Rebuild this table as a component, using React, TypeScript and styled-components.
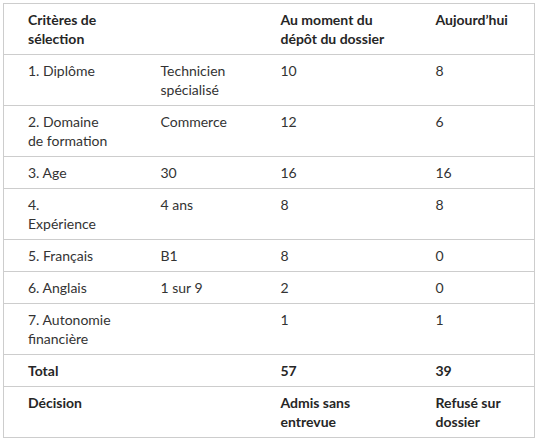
import React from "react";
import styled, { createGlobalStyle } from "styled-components";

const Global = createGlobalStyle`
  html, body { margin: 0; padding: 0; background: #ffffff; }
  body { padding: 3px; font-family: Lato, "Open Sans", sans-serif; }
`;

const Table = styled.table`
  border-collapse: collapse;
  width: 531px;
  table-layout: fixed;
  border: 1px solid #cdcdcd;
  font-family: Lato, "Open Sans", sans-serif;
  font-size: 14px;
  line-height: 19px;
  color: #333333;
`;

const Col = styled.col<{ $w: number }>`
  width: ${(p) => p.$w}px;
`;

const Row = styled.tr`
  border-bottom: 1px solid #cdcdcd;
`;

const Cell = styled.td<{ $bold?: boolean }>`
  padding: 6px 8px 6px 24px;
  vertical-align: top;
  text-align: left;
  white-space: nowrap;
  font-weight: ${(p) => (p.$bold ? 700 : 400)};
  color: ${(p) => (p.$bold ? "#262626" : "#333333")};
`;

type RowData = { cells: React.ReactNode[]; bold?: boolean };

const rows: RowData[] = [
  {
    bold: true,
    cells: [
      <>Critères de<br />sélection</>,
      "",
      <>Au moment du<br />dépôt du dossier</>,
      "Aujourd’hui",
    ],
  },
  { cells: ["1. Diplôme", <>Technicien<br />spécialisé</>, "10", "8"] },
  { cells: [<>2. Domaine<br />de formation</>, "Commerce", "12", "6"] },
  { cells: ["3. Age", "30", "16", "16"] },
  { cells: [<>4.<br />Expérience</>, "4 ans", "8", "8"] },
  { cells: ["5. Français", "B1", "8", "0"] },
  { cells: ["6. Anglais", "1 sur 9", "2", "0"] },
  { cells: [<>7. Autonomie<br />financière</>, "", "1", "1"] },
  { bold: true, cells: ["Total", "", "57", "39"] },
  {
    bold: true,
    cells: ["Décision", "", <>Admis sans<br />entrevue</>, <>Refusé sur<br />dossier</>],
  },
];

export default function App() {
  return (
    <>
      <Global />
      <Table>
        <colgroup>
          <Col $w={133} />
          <Col $w={120} />
          <Col $w={155} />
          <Col $w={123} />
        </colgroup>
        <tbody>
          {rows.map((r, i) => (
            <Row key={i}>
              {r.cells.map((c, j) => (
                <Cell key={j} $bold={r.bold}>
                  {c}
                </Cell>
              ))}
            </Row>
          ))}
        </tbody>
      </Table>
    </>
  );
}
